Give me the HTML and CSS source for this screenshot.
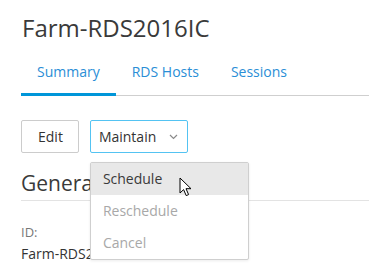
FILE: index.html
```html
<!DOCTYPE html>
<html>
  <head>
    <title>Farm-RDS2016IC</title>
    <link rel="stylesheet" href="styles.css">
  </head>
  <body>
    <h1 class="page-title">Farm-RDS2016IC</h1>

    <div class="tabs">
      <a class="tab is-active">Summary</a>
      <a class="tab">RDS Hosts</a>
      <a class="tab">Sessions</a>
    </div>

    <div class="toolbar">
      <button type="button" class="btn btn-edit">Edit</button>
      <div class="menu-wrap">
        <button type="button" class="btn btn-open">
          Maintain
          <svg class="chevron" width="9" height="6" viewBox="0 0 9 6">
            <path d="M1 1 L4.5 4.5 L8 1" fill="none" stroke="#8a8a8a" stroke-width="1.2"/>
          </svg>
        </button>
        <ul class="menu">
          <li class="menu-item is-hover">Schedule</li>
          <li class="menu-item is-disabled">Reschedule</li>
          <li class="menu-item is-disabled">Cancel</li>
        </ul>
        <svg class="cursor" width="14" height="21" viewBox="0 0 14 21">
          <path d="M1 1 L1 16 L4.6 12.6 L7.2 18.6 L9.6 17.6 L7 11.7 L12 11.7 Z" fill="#fff" stroke="#000" stroke-width="1" stroke-linejoin="round"/>
        </svg>
      </div>
    </div>

    <h2 class="section-title">General</h2>
    <div class="field-label">ID:</div>
    <div class="field-value">Farm-RDS2016IC</div>
  </body>
</html>
```

FILE: styles.css
```css
body {
  margin: 0;
  padding: 0 0 0 21px;
  font-family: "Open Sans", "DejaVu Sans", sans-serif;
  color: #333;
  background-color: white;
  overflow: hidden;
}
.page-title {
  margin: 12px 0 0 1px;
  font-size: 24px;
  line-height: 32px;
  font-weight: normal;
  color: #3a3a3a;
}
.tabs {
  display: flex;
  margin-top: 18px;
  border-bottom: 1px solid #cfcfcf;
}
.tab {
  padding: 0 16px 11px;
  font-size: 14px;
  line-height: 20px;
  color: #2a8ed6;
  border-bottom: 3px solid transparent;
  margin-bottom: -1px;
}
.tab.is-active {
  border-bottom-color: #0096d9;
}
.toolbar {
  display: flex;
  gap: 11px;
  margin-top: 24px;
}
.btn {
  height: 33px;
  padding: 0 15px;
  font-family: inherit;
  font-size: 14px;
  color: #333;
  background-color: white;
  border: 1px solid #cccccc;
  border-radius: 2px;
}
.btn-edit {
  padding: 0 15px 0 16px;
}
.btn-open {
  display: flex;
  align-items: center;
  width: 98px;
  padding: 0 7px 0 8px;
  border-color: #53c3f2;
}
.chevron {
  margin-left: auto;
  margin-right: 2px;
}
.menu-wrap {
  position: relative;
}
.menu {
  position: absolute;
  top: 42px;
  left: 0;
  width: 157px;
  margin: 0;
  padding: 0;
  list-style: none;
  background-color: white;
  border: 1px solid #cfcfcf;
  border-radius: 2px;
  box-shadow: 0 1px 3px rgba(0, 0, 0, 0.08);
  z-index: 2;
}
.menu-item {
  height: 32px;
  padding-left: 12px;
  font-size: 14px;
  line-height: 32px;
  color: #3a3a3a;
}
.menu-item.is-hover {
  background-color: #e8e8e8;
}
.menu-item.is-disabled {
  color: #a8a8a8;
}
.cursor {
  position: absolute;
  top: 57px;
  left: 89px;
  z-index: 3;
}
.section-title {
  margin: 16px 0 0;
  padding-bottom: 3px;
  font-size: 21px;
  line-height: 28px;
  font-weight: normal;
  color: #3a3a3a;
  border-bottom: 1px solid #e3e3e3;
}
.field-label {
  margin-top: 22px;
  font-size: 13px;
  line-height: 18px;
  color: #777;
}
.field-value {
  margin-top: 3px;
  font-size: 14px;
  line-height: 19px;
  color: #333;
}
```
